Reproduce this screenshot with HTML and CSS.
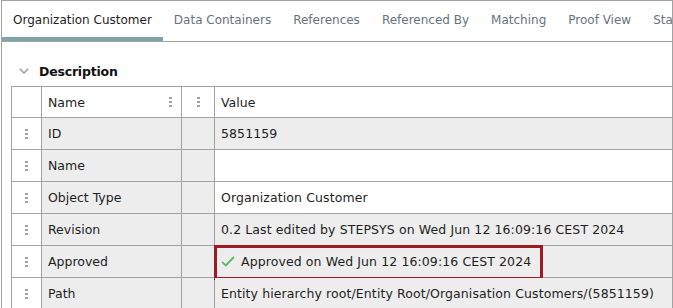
FILE: index.html
```html
<!DOCTYPE html>
<html lang="en">
<head>
    <meta charset="UTF-8">
    <meta name="viewport" content="width=device-width, initial-scale=1.0">
    <title>Organization Customer</title>
    <link rel="stylesheet" href="styles.css">
</head>
<body>

    <div class="panel">
        <div class="tabs">
            <div class="tab active">Organization Customer</div>
            <div class="tab">Data Containers</div>
            <div class="tab">References</div>
            <div class="tab">Referenced By</div>
            <div class="tab">Matching</div>
            <div class="tab">Proof View</div>
            <div class="tab">Status</div>
        </div>

        <div class="section">
            <div class="section-title">
                <svg class="chevron" width="10" height="6" viewBox="0 0 10 6">
                    <path d="M0.7 0.7 L5 5 L9.3 0.7" fill="none" stroke="#9a9a9a" stroke-width="1.4"/>
                </svg>
                <span>Description</span>
            </div>

            <div class="grid">
                <!-- encabezado -->
                <div class="cell handle-col head"></div>
                <div class="cell head name-head">Name <span class="dots"></span></div>
                <div class="cell head center"><span class="dots"></span></div>
                <div class="cell head">Value</div>

                <div class="cell handle-col"><span class="dots"></span></div>
                <div class="cell ro">ID</div>
                <div class="cell ro"></div>
                <div class="cell ro value">5851159</div>

                <div class="cell handle-col"><span class="dots"></span></div>
                <div class="cell ro">Name</div>
                <div class="cell ro"></div>
                <div class="cell value"></div>

                <div class="cell handle-col"><span class="dots"></span></div>
                <div class="cell ro">Object Type</div>
                <div class="cell ro"></div>
                <div class="cell value">Organization Customer</div>

                <div class="cell handle-col"><span class="dots"></span></div>
                <div class="cell ro">Revision</div>
                <div class="cell ro"></div>
                <div class="cell ro value">0.2 Last edited by STEPSYS on Wed Jun 12 16:09:16 CEST 2024</div>

                <div class="cell handle-col"><span class="dots"></span></div>
                <div class="cell ro">Approved</div>
                <div class="cell ro"></div>
                <div class="cell ro value approved">
                    <svg class="check" width="14" height="11" viewBox="0 0 14 11">
                        <path d="M1 5.8 L4.8 9.4 L13 1" fill="none" stroke="#5cb85c" stroke-width="1.8"/>
                    </svg>
                    <span>Approved on Wed Jun 12 16:09:16 CEST 2024</span>
                    <div class="highlight"></div>
                </div>

                <div class="cell handle-col"><span class="dots"></span></div>
                <div class="cell ro">Path</div>
                <div class="cell ro"></div>
                <div class="cell ro value">Entity hierarchy root/Entity Root/Organisation Customers/(5851159)</div>
            </div>
        </div>
    </div>

</body>
</html>
```

FILE: styles.css
```css
body {
    margin: 0;
    font-family: "DejaVu Sans", Verdana, sans-serif;
    font-size: 12px;
    color: #1e1e1e;
    background-color: white;
    overflow: hidden;
    height: 308px;
}

.panel {
    margin-left: 1px;
    width: 670px;
    height: 307px;
    border: 1px solid #a3a3a3;
    border-bottom: none;
    overflow: hidden;
}

/* Pestañas */
.tabs {
    display: flex;
    height: 40px;
    border-bottom: 1px solid #a3a3a3;
    white-space: nowrap;
    overflow: hidden;
}

.tab {
    padding: 0 11px;
    line-height: 39px;
    color: #66737c;
    flex-shrink: 0;
}

.tab.active {
    color: #1e1e1e;
    border-bottom: 4px solid #80a3aa;
    height: 36px;
}

/* Sección */
.section {
    padding: 0 0 0 9px;
}

.section-title {
    display: flex;
    align-items: center;
    height: 30px;
    padding-top: 14px;
    padding-left: 8px;
    font-weight: bold;
    font-size: 12.5px;
    letter-spacing: -0.2px;
    color: #111;
}

.chevron {
    margin-right: 10px;
}

.grid {
    display: grid;
    grid-template-columns: 29px 139px 32px 1fr;
    grid-template-rows: 30px repeat(6, 31px);
    gap: 1px;
    background-color: #a3a3a3;
    border: 1px solid #a3a3a3;
    border-right: none;
    font-size: 12.5px;
}

.cell {
    background-color: white;
    display: flex;
    align-items: center;
    padding-left: 6px;
    position: relative;
    white-space: nowrap;
}

.cell.ro {
    background-color: #ededed;
}

.cell.value {
    letter-spacing: 0.1px;
}

.handle-col {
    justify-content: center;
    padding-left: 0;
}

.head.center {
    justify-content: center;
    padding-left: 0;
}

.name-head {
    justify-content: space-between;
    padding-right: 9px;
}

/* Puntos de arrastre */
.dots {
    display: block;
    width: 3px;
    height: 12px;
    background-image: radial-gradient(circle, #a0a0a0 1.2px, transparent 1.4px);
    background-size: 3px 4px;
}

.approved .check {
    margin-right: 6px;
}

.highlight {
    position: absolute;
    left: -1px;
    top: -1px;
    width: 323px;
    height: 29px;
    border: 3px solid #9c1c26;
}
```
